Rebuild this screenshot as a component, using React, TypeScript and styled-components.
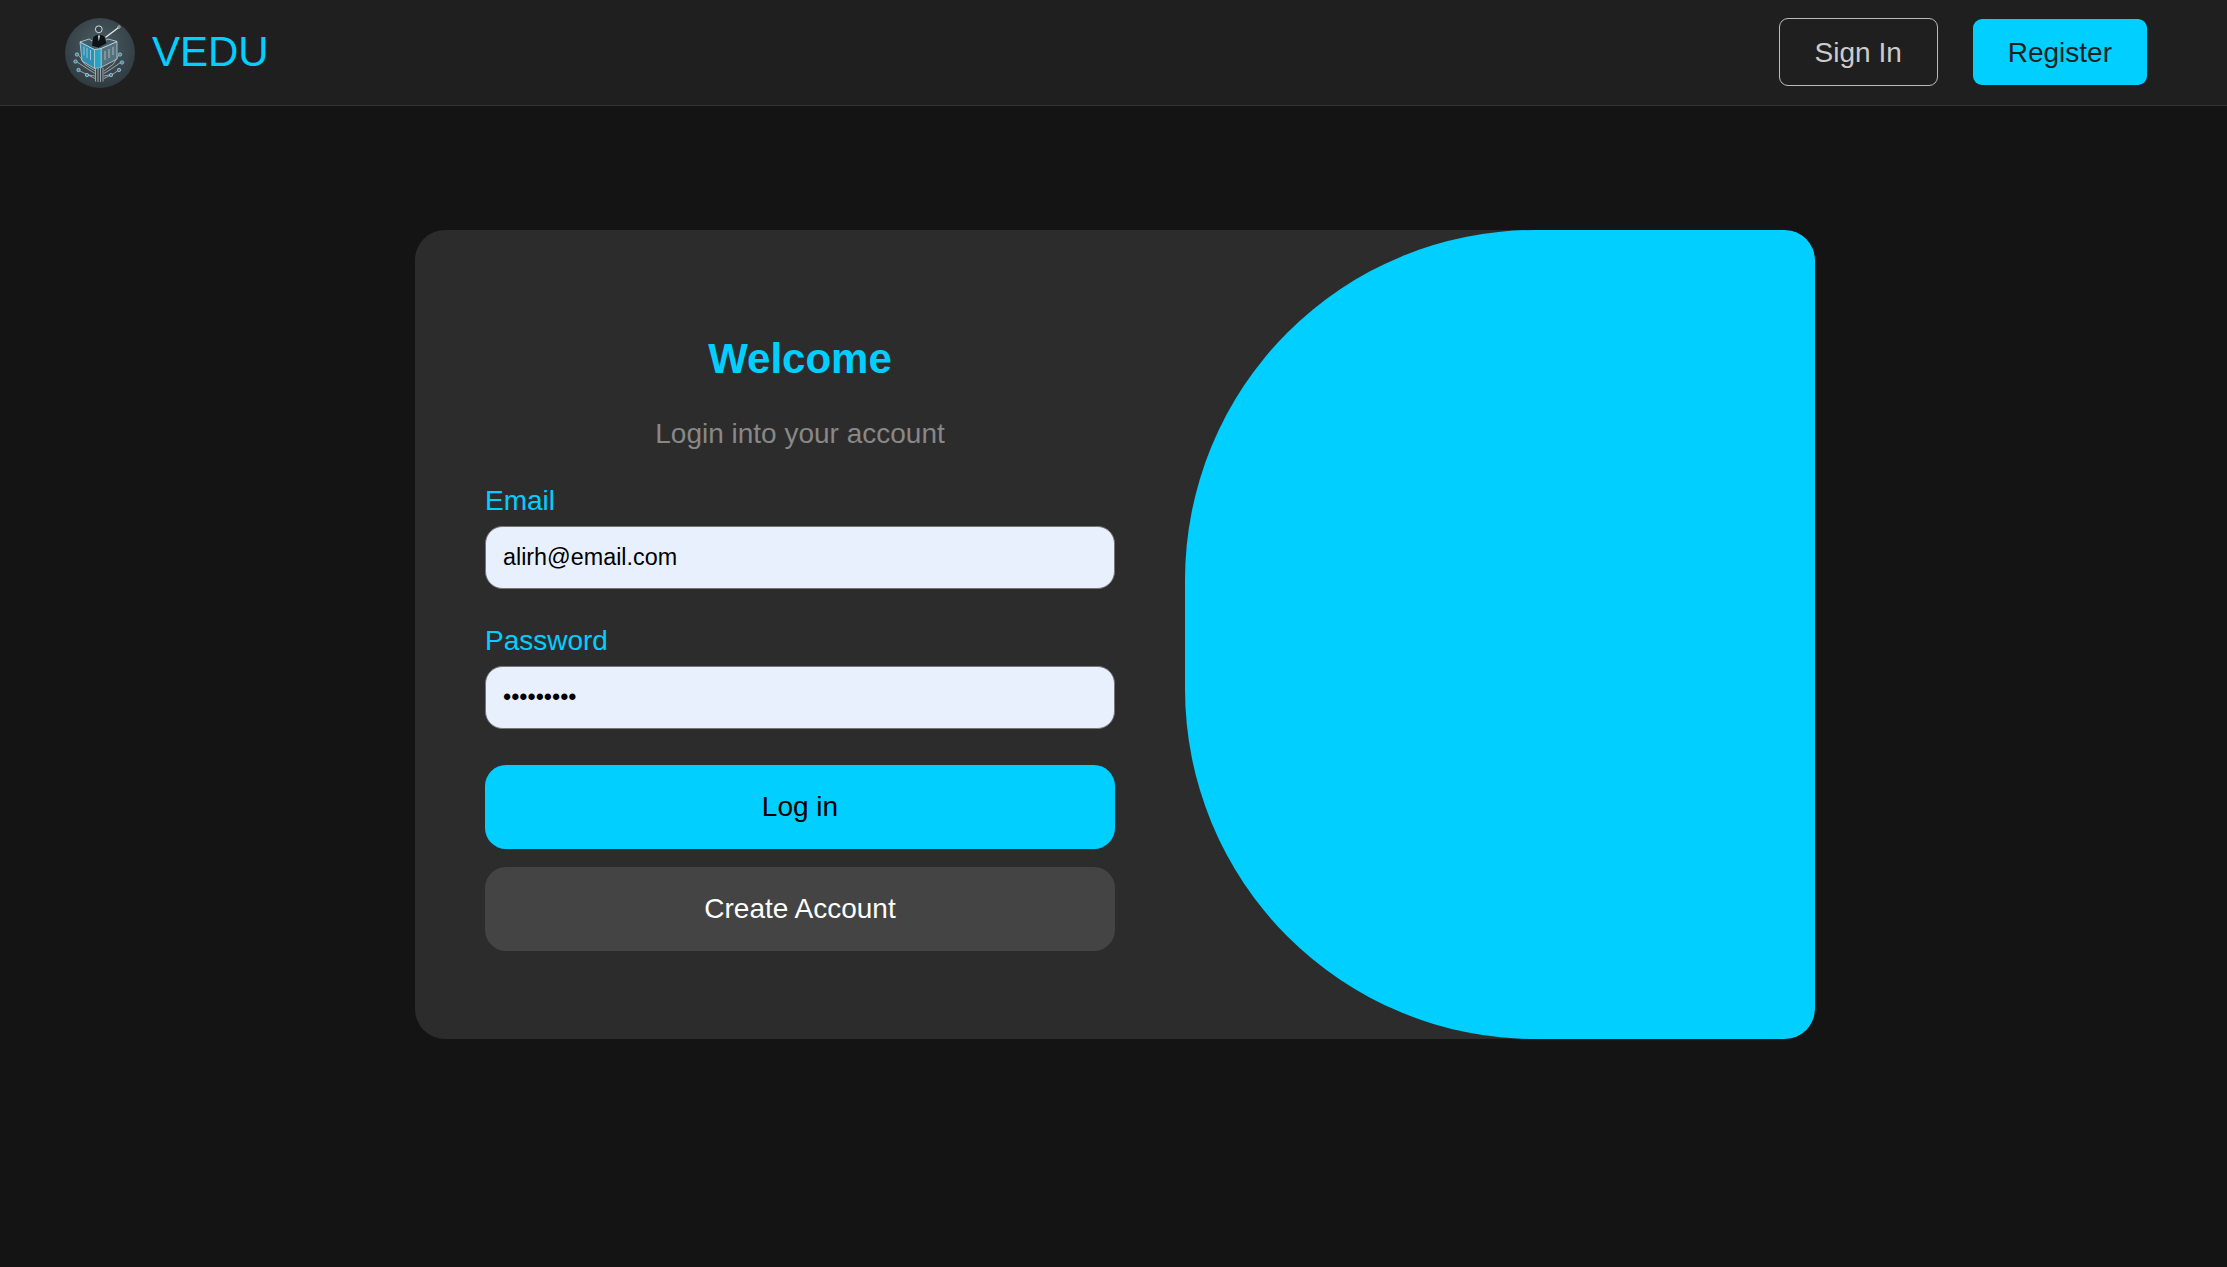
import React from "react";
import styled, { createGlobalStyle } from "styled-components";

const GlobalStyle = createGlobalStyle`
  html, body { margin: 0; padding: 0; background: #141414; }
  body { font-family: "Liberation Sans", Arial, sans-serif; min-height: 100vh; }
  * { box-sizing: border-box; }
`;

const Page = styled.div`
  min-height: 1267px;
  background: #141414;
`;

const NavBar = styled.header`
  height: 106px;
  background: #1f1f1f;
  border-bottom: 1px solid #333;
  display: flex;
  align-items: center;
  justify-content: space-between;
  padding: 0 80px 1px 65px;
`;

const Brand = styled.div`
  display: flex;
  align-items: center;
  gap: 17px;
`;

const LogoMark = styled.svg`
  width: 70px;
  height: 70px;
  display: block;
  margin-top: 2px;
`;

const BrandName = styled.span`
  color: #00cfff;
  font-size: 42px;
  line-height: 48px;
`;

const NavActions = styled.nav`
  display: flex;
  align-items: center;
  gap: 35px;
`;

const NavButton = styled.button<{ $primary?: boolean }>`
  font-family: inherit;
  font-size: 28px;
  padding: 2px 35px 0;
  height: ${(p) => (p.$primary ? "66px" : "68px")};
  border-radius: 9px;
  border: ${(p) => (p.$primary ? "none" : "1px solid #bbb")};
  background: ${(p) => (p.$primary ? "#00cfff" : "transparent")};
  color: ${(p) => (p.$primary ? "#1f1f1f" : "#ccc")};
`;

const Main = styled.main`
  display: flex;
  justify-content: center;
  padding: 124px 0 0 3px;
`;

const Card = styled.section`
  width: 1400px;
  height: 809px;
  display: flex;
  background: #2c2c2c;
  border-radius: 30px;
  overflow: hidden;
`;

const FormPane = styled.form`
  width: 770px;
  padding: 105px 70px 0;
  display: flex;
  flex-direction: column;
`;

const Title = styled.h1`
  margin: 0;
  color: #00cfff;
  font-size: 42px;
  line-height: 48px;
  font-weight: 700;
  text-align: center;
`;

const Subtitle = styled.p`
  margin: 35px 0 35px;
  color: #888;
  font-size: 28px;
  line-height: 32px;
  text-align: center;
`;

const Field = styled.div`
  display: flex;
  flex-direction: column;
  gap: 9px;
  margin-bottom: 36px;
`;

const Label = styled.label`
  color: #00cfff;
  font-size: 28px;
  line-height: 32px;
`;

const Input = styled.input`
  width: 100%;
  height: 63px;
  padding: 0 17px;
  font-family: inherit;
  font-size: 23.33px;
  color: #000;
  background: #e8f0fe;
  border: 1px solid #767676;
  border-radius: 17.5px;
  outline: none;
`;

const ActionButton = styled.button<{ $secondary?: boolean }>`
  width: 100%;
  height: 84px;
  font-family: inherit;
  font-size: 28px;
  border: none;
  border-radius: 21px;
  background: ${(p) => (p.$secondary ? "#444" : "#00cfff")};
  color: ${(p) => (p.$secondary ? "#fff" : "#000")};
  margin-top: ${(p) => (p.$secondary ? "18px" : "0")};
`;

const Accent = styled.aside`
  width: 630px;
  background: #00cfff;
  border-radius: 350px 30px 30px 350px;
`;

const nodes: [number, number][] = [
  [12, 36.5], [10.5, 43.5], [13.5, 52], [22, 57],
  [46, 57], [54, 52], [57, 44.5], [55, 36.5],
];

function Logo() {
  return (
    <LogoMark viewBox="0 0 70 70" aria-hidden="true">
      <defs>
        <radialGradient id="disc" cx="50%" cy="40%" r="60%">
          <stop offset="0%" stopColor="#4d5d64" />
          <stop offset="100%" stopColor="#2f3b41" />
        </radialGradient>
      </defs>
      <circle cx="35" cy="35" r="35" fill="url(#disc)" />
      <g fill="none" stroke="#c3ced2" strokeWidth="0.7">
        <path d="M30.5 50v13.5M33 50v14M35.5 50v14M38 50v13.5" />
        <path d="M30 53L20 46.5L14 37.5M30 55.5L22 50.5L12 44M30 58L24 57H23.5M30 60.5L21 56L15 53" />
        <path d="M39 53L48 46.5L53.5 37.5M39 55.5L47 50.5L55.5 44.5M39 58L44 57H44.5M39 60.5L48 56L52.5 53" />
      </g>
      {nodes.map(([x, y]) => (
        <circle key={`${x}-${y}`} cx={x} cy={y} r="1.7" fill="#2a8fae" stroke="#d5dde0" strokeWidth="0.6" />
      ))}
      <path d="M15 24L29.5 31.5V50.5L17 43Z" fill="#2c8fb3" stroke="#d3dcdf" strokeWidth="0.7" />
      <path d="M36 30.5L52 23.5V41L36 49.5Z" fill="#54727e" stroke="#d3dcdf" strokeWidth="0.7" />
      <path d="M29.5 31.5L36 30.5V49.5L29.5 50.5Z" fill="#28a3c4" stroke="#d3dcdf" strokeWidth="0.5" />
      <path d="M15 24L24 21L33 26.5L43 21L52 23.5L36 30.5L29.5 31.5Z" fill="#3f5d69" stroke="#dfe6e8" strokeWidth="0.7" />
      <g fill="none" stroke="#e3eaec" strokeWidth="0.6">
        <path d="M19 28.5v9M22 30v10M25.5 32v10M40 33v9M44 31v9M48 29v8" />
      </g>
      <path d="M26.5 28L28 18.5Q33.5 14.5 39.5 18L42 25.5L33.5 30Z" fill="#0c1317" stroke="#7d8a90" strokeWidth="0.4" />
      <path d="M33 17.5L33.8 23.5L35 17.5Z" fill="#e4ebee" />
      <circle cx="33.8" cy="11.3" r="3.4" fill="#36444a" stroke="#e4ebee" strokeWidth="0.9" />
      <path d="M41 19L53 10" stroke="#e4ebee" strokeWidth="1.3" strokeLinecap="round" />
      <circle cx="54" cy="9" r="1.2" fill="#2c383e" stroke="#e4ebee" strokeWidth="0.7" />
    </LogoMark>
  );
}

export default function App() {
  return (
    <Page>
      <GlobalStyle />
      <NavBar>
        <Brand>
          <Logo />
          <BrandName>VEDU</BrandName>
        </Brand>
        <NavActions>
          <NavButton type="button">Sign In</NavButton>
          <NavButton type="button" $primary>Register</NavButton>
        </NavActions>
      </NavBar>
      <Main>
        <Card>
          <FormPane onSubmit={(e) => e.preventDefault()}>
            <Title>Welcome</Title>
            <Subtitle>Login into your account</Subtitle>
            <Field>
              <Label htmlFor="email">Email</Label>
              <Input id="email" type="email" defaultValue="alirh@email.com" />
            </Field>
            <Field>
              <Label htmlFor="password">Password</Label>
              <Input id="password" type="password" defaultValue="123456789" />
            </Field>
            <ActionButton type="submit">Log in</ActionButton>
            <ActionButton type="button" $secondary>Create Account</ActionButton>
          </FormPane>
          <Accent />
        </Card>
      </Main>
    </Page>
  );
}
